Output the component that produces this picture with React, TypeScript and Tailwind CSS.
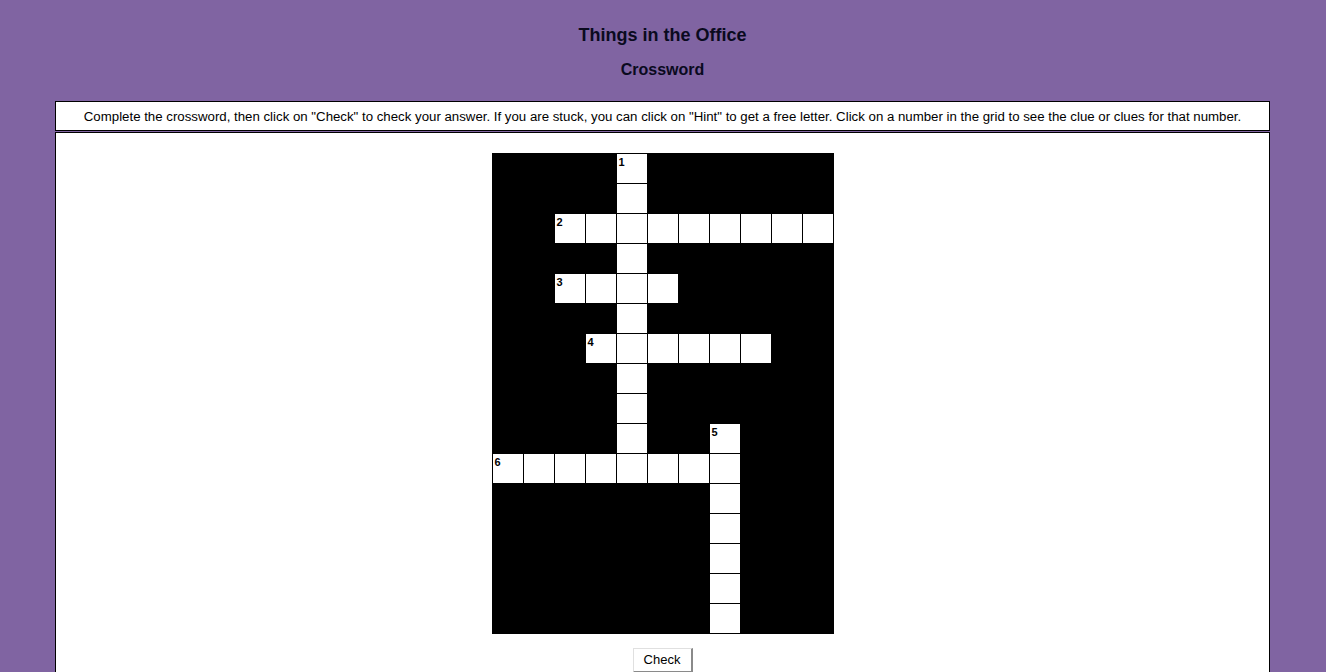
import React from "react";

// Crossword layout: '.' is a blocked square, '#' is an open square, digits mark numbered open squares.
const rows: string[] = [
  "....1......",
  "....#......",
  "..2########",
  "....#......",
  "..3###.....",
  "....#......",
  "...4#####..",
  "....#......",
  "....#......",
  "....#..5...",
  "6#######...",
  ".......#...",
  ".......#...",
  ".......#...",
  ".......#...",
  ".......#...",
];

function Cell({ ch }: { ch: string }) {
  if (ch === ".") return <div className="w-[31px] h-[30px] bg-black" />;
  const num = /[0-9]/.test(ch) ? ch : null;
  return (
    <div className="w-[31px] h-[30px] bg-white border-l border-t border-black box-border pl-[2px] pt-[3px]">
      {num && <span className="block text-[11px] font-bold leading-none text-black">{num}</span>}
    </div>
  );
}

export default function App() {
  return (
    <div
      className="min-h-screen bg-[#8064a2] pl-[55px] pr-[56px] pb-[40px]"
      style={{ fontFamily: '"Liberation Sans", Arial, sans-serif' }}
    >
      <h2 className="pt-[24px] text-center text-[18px] leading-[22px] font-bold text-[#0a0a1e]">
        Things in the Office
      </h2>
      <h3 className="mt-[14px] text-center text-[16px] leading-[20px] font-bold text-[#0a0a1e]">
        Crossword
      </h3>

      <div className="mt-[21px] h-[30px] border border-black bg-white flex items-center justify-center pt-[2px] text-[13.25px] text-black">
        Complete the crossword, then click on "Check" to check your answer. If you are stuck, you can click on "Hint" to get a free letter. Click on a number in the grid to see the clue or clues for that number.
      </div>

      <div className="mt-px border border-black bg-white pt-[20px] pb-[20px] flex flex-col items-center">
        <div className="grid grid-cols-[repeat(11,31px)] bg-black pr-px pb-px">
          {rows.map((r, i) =>
            r.split("").map((ch, j) => <Cell key={`${i}-${j}`} ch={ch} />)
          )}
        </div>
        <button className="mt-[14px] h-[25px] w-[60px] bg-white text-[13px] text-black border border-t-[#e0e0e0] border-l-[#e0e0e0] border-r-2 border-b-2 border-r-[#8a8a8a] border-b-[#8a8a8a]">
          Check
        </button>
      </div>
    </div>
  );
}
